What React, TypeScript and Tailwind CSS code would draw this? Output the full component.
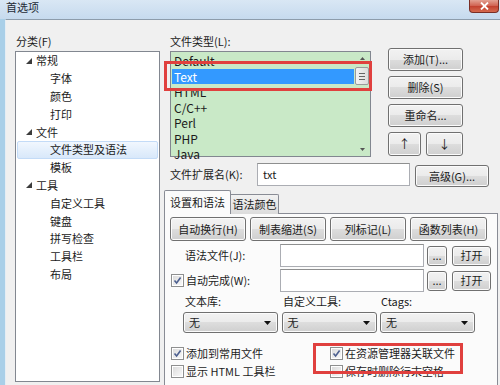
import React from "react";

const SKIN =
  "rounded-[3px] border border-[#707070] bg-[linear-gradient(#f2f2f2_0%,#ebebeb_50%,#dddddd_50%,#cfcfcf_100%)] shadow-[inset_0_0_0_1px_#fbfbfb] text-[#1b1b1b] text-[11px]";

function Btn({ children, className = "" }: { children?: React.ReactNode; className?: string }) {
  return <div className={`flex items-center justify-center ${SKIN} ${className}`}>{children}</div>;
}

function Check({ checked }: { checked: boolean }) {
  return (
    <div className="w-[13px] h-[13px] border border-[#8e8f8f] bg-white p-[1px] shrink-0">
      <div className="w-full h-full bg-[linear-gradient(135deg,#dcdcdc,#f8f8f8)] relative">
        {checked && (
          <svg width="9" height="9" viewBox="0 0 9 9" className="absolute left-0 top-0">
            <path d="M1.5 4.5 L3.6 7 L7.6 1.5" stroke="#4c5f8f" strokeWidth="1.6" fill="none" />
          </svg>
        )}
      </div>
    </div>
  );
}

function Select() {
  return (
    <div className={`flex items-center justify-between ${SKIN} w-[95px] h-[21px] pl-[5px] pr-[6px]`}>
      <span>无</span>
      <svg width="7" height="4" viewBox="0 0 7 4">
        <path d="M0 0 H7 L3.5 4 Z" fill="#111" />
      </svg>
    </div>
  );
}

function Tri() {
  return (
    <svg width="6" height="6" viewBox="0 0 6 6" className="shrink-0">
      <path d="M6 0 V6 H0 Z" fill="#3c3c3c" />
    </svg>
  );
}

const treeItems: { t: string; lvl: number; sel?: boolean }[] = [
  { t: "常规", lvl: 0 },
  { t: "字体", lvl: 1 },
  { t: "颜色", lvl: 1 },
  { t: "打印", lvl: 1 },
  { t: "文件", lvl: 0 },
  { t: "文件类型及语法", lvl: 1, sel: true },
  { t: "模板", lvl: 1 },
  { t: "工具", lvl: 0 },
  { t: "自定义工具", lvl: 1 },
  { t: "键盘", lvl: 1 },
  { t: "拼写检查", lvl: 1 },
  { t: "工具栏", lvl: 1 },
  { t: "布局", lvl: 1 },
];

const types = ["Default", "Text", "HTML", "C/C++", "Perl", "PHP", "Java"];

export default function App() {
  return (
    <div className="relative w-[500px] h-[385px] overflow-hidden bg-[#a9cfe8] flex flex-col font-['Noto_Sans_CJK_SC',sans-serif] text-[11px] text-[#1b1b1b] leading-none">
      {/* title bar */}
      <div className="h-[19px] shrink-0 bg-[linear-gradient(#d9e7f4,#c6daee)] flex items-start pl-[6px] pt-[2px]">
        <span className="text-[11px] text-[#1e2a36]">首选项</span>
      </div>
      <div className="absolute right-[1px] top-0 w-[30px] h-[13px] rounded-b-[4px] border border-t-0 border-[#7a2e25] bg-[linear-gradient(#e3a193,#d0604f_50%,#c2402f_51%,#d56a4f)] flex items-center justify-center">
        <svg width="9" height="8" viewBox="0 0 9 8">
          <path d="M1 0.5 L8 7.5 M8 0.5 L1 7.5" stroke="#fff" strokeWidth="1.8" />
        </svg>
      </div>

      {/* body */}
      <div className="flex-1 min-h-0 overflow-hidden ml-[5px] border-t border-l border-t-[#8d9cab] border-l-[#e4edf5] bg-[#f0f0f0] flex items-start pt-[13px]">
        {/* left column */}
        <div className="ml-[9px] w-[145px] flex flex-col shrink-0">
          <div className="h-[16px] flex items-center pl-[1px]">分类(F)</div>
          <div className="mt-[2px] h-[331px] border border-[#828790] bg-white">
            {treeItems.map((it) => (
              <div
                key={it.t}
                className={`h-[17.8px] flex items-center mx-[1px] ${
                  it.sel ? "rounded-[2px] border border-[#c3dbf7] bg-[linear-gradient(#f1f7fe,#d8e8fa)]" : "border border-transparent"
                }`}
              >
                {it.lvl === 0 ? (
                  <div className="flex items-center pl-[8px] gap-[4px]">
                    <Tri />
                    <span>{it.t}</span>
                  </div>
                ) : (
                  <span className="pl-[32px]">{it.t}</span>
                )}
              </div>
            ))}
          </div>
        </div>

        {/* right area */}
        <div className="ml-[4px] w-[334px] flex flex-col">
          {/* upper row */}
          <div className="flex pl-[6px]">
            <div className="flex flex-col w-[201px]">
              <div className="h-[16px] flex items-center">文件类型(L):</div>
              <div className="mt-[2px] h-[106px] border border-[#828790] bg-[#c9e9c7] flex">
                <div className="flex-1 flex flex-col pt-[1px]">
                  {types.map((t) => (
                    <div
                      key={t}
                      className={`h-[15.5px] leading-[15.5px] pl-[2px] ml-[1px] text-[12px] ${
                        t === "Text" ? "bg-[#3399ff] text-white" : "text-[#1b1b1b]"
                      }`}
                    >
                      {t}
                    </div>
                  ))}
                </div>
                <div className="w-[16px] flex flex-col items-center">
                  <svg width="5" height="3" viewBox="0 0 5 3" className="mt-[5px]">
                    <path d="M0 3 L2.5 0 L5 3 Z" fill="#555" />
                  </svg>
                  <div className="mt-[7px] w-[14px] h-[18px] rounded-[2px] border border-[#9a9a9a] bg-[linear-gradient(90deg,#f4f4f4,#dcdcdc)] flex flex-col items-center justify-center gap-[2px]">
                    <div className="w-[6px] h-[1px] bg-[#666]" />
                    <div className="w-[6px] h-[1px] bg-[#666]" />
                    <div className="w-[6px] h-[1px] bg-[#666]" />
                  </div>
                  <div className="flex-1" />
                  <svg width="5" height="3" viewBox="0 0 5 3" className="mb-[5px]">
                    <path d="M0 0 L2.5 3 L5 0 Z" fill="#555" />
                  </svg>
                </div>
              </div>
            </div>
            <div className="ml-[17px] pt-[15px] flex flex-col gap-[5px]">
              <Btn className="w-[75px] h-[23px]">添加(T)...</Btn>
              <Btn className="w-[75px] h-[23px]">删除(S)</Btn>
              <Btn className="w-[75px] h-[23px]">重命名...</Btn>
              <div className="flex gap-[5px]">
                <Btn className="w-[33px] h-[24px] text-[12px]">↑</Btn>
                <Btn className="w-[37px] h-[24px] text-[12px]">↓</Btn>
              </div>
            </div>
          </div>

          {/* extension row */}
          <div className="mt-[5px] h-[25px] flex items-start pl-[6px]">
            <div className="w-[87px] h-[25px] flex items-center">文件扩展名(K):</div>
            <div className="mt-[1px] w-[153px] h-[23px] border border-[#abadb3] border-t-[#8e8f8f] bg-white flex items-center pl-[5px]">
              txt
            </div>
            <Btn className="ml-[5px] mt-[3px] w-[74px] h-[22px]">高级(G)...</Btn>
          </div>

          {/* tabs */}
          <div className="mt-[3px] flex items-end h-[24px] relative z-10">
            <div className="w-[67px] h-[24px] border border-b-0 border-[#898c95] bg-[#fbfbfb] rounded-t-[2px] flex items-center justify-center">
              设置和语法
            </div>
            <div className="w-[48px] h-[20px] border border-l-0 border-b-0 border-[#898c95] bg-[linear-gradient(#f2f2f2,#dcdcdc)] rounded-tr-[2px] flex items-center justify-center">
              语法颜色
            </div>
          </div>
          <div className="-mt-[1px] h-[190px] border border-[#898c95] bg-[#fbfbfb] flex flex-col pt-[3px]">
            <div className="flex pl-[5px] gap-[4px]">
              <Btn className="w-[76px] h-[24px]">自动换行(H)</Btn>
              <Btn className="w-[76px] h-[24px]">制表缩进(S)</Btn>
              <Btn className="w-[76px] h-[24px]">列标记(L)</Btn>
              <Btn className="w-[77px] h-[24px]">函数列表(H)</Btn>
            </div>

            <div className="mt-[3px] flex items-center h-[23px]">
              <div className="w-[115px] pl-[20px]">语法文件(J):</div>
              <div className="w-[144px] h-[23px] border border-[#abadb3] border-t-[#8e8f8f] bg-white" />
              <Btn className="ml-[3px] w-[20px] h-[20px]">...</Btn>
              <Btn className="ml-[5px] w-[39px] h-[20px]">打开</Btn>
            </div>

            <div className="mt-[2px] flex items-center h-[23px]">
              <div className="w-[115px] pl-[6px] flex items-center gap-[2px]">
                <Check checked />
                <span>自动完成(W):</span>
              </div>
              <div className="w-[144px] h-[23px] border border-[#abadb3] border-t-[#8e8f8f] bg-white" />
              <Btn className="ml-[3px] w-[20px] h-[20px]">...</Btn>
              <Btn className="ml-[5px] w-[39px] h-[20px]">打开</Btn>
            </div>

            <div className="mt-[1px] h-[16px] flex items-center pl-[20px]">
              <div className="w-[98px]">文本库:</div>
              <div className="w-[98px]">自定义工具:</div>
              <div>Ctags:</div>
            </div>
            <div className="mt-[3px] flex pl-[18px] gap-[3.5px]">
              <Select />
              <Select />
              <Select />
            </div>

            <div className="mt-[11px] h-[18px] flex items-center">
              <div className="w-[165px] pl-[6px] flex items-center gap-[2px]">
                <Check checked />
                <span>添加到常用文件</span>
              </div>
              <div className="flex items-center gap-[2px]">
                <Check checked />
                <span>在资源管理器关联文件</span>
              </div>
            </div>
            <div className="h-[18px] flex items-center">
              <div className="w-[165px] pl-[6px] flex items-center gap-[2px]">
                <Check checked={false} />
                <span>显示 HTML 工具栏</span>
              </div>
              <div className="flex items-center gap-[2px]">
                <Check checked={false} />
                <span>保存时删除行末空格</span>
              </div>
            </div>
          </div>
        </div>
      </div>

      {/* red highlight boxes */}
      <div className="absolute left-[164px] top-[61px] w-[208px] h-[30px] border-[3px] border-[#e0403e]" />
      <div className="absolute left-[313px] top-[343px] w-[150px] h-[31px] border-[3px] border-[#e0403e]" />
    </div>
  );
}
